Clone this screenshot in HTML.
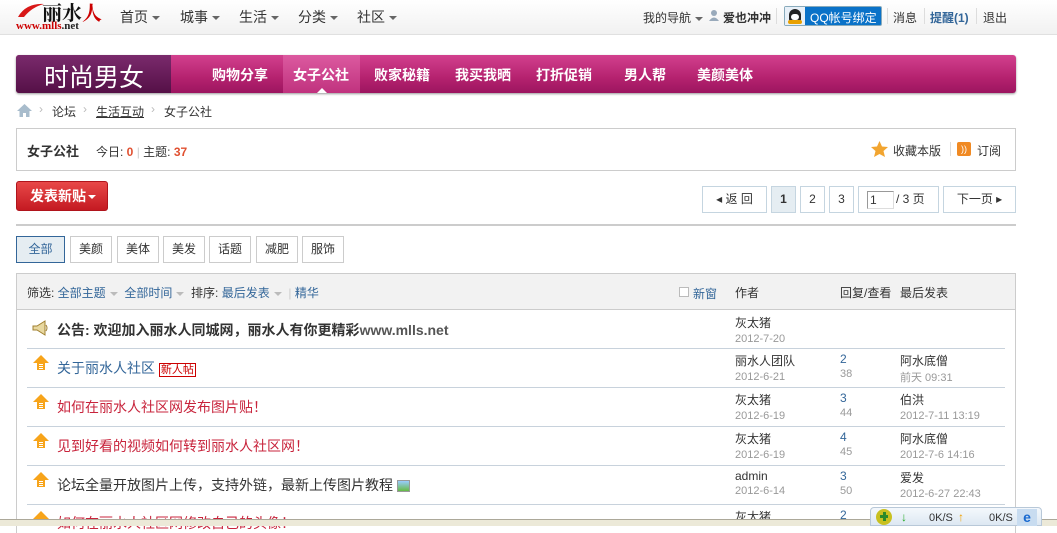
<!DOCTYPE html>
<html><head><meta charset="utf-8"><style>
*{margin:0;padding:0;box-sizing:border-box}
body{width:1057px;height:526px;overflow:hidden;position:relative;background:#fff;font-family:"Liberation Sans","Noto Sans CJK SC",sans-serif;font-size:12px;color:#333}
.a{position:absolute;white-space:nowrap}
.top{left:0;top:0;width:1057px;height:35px;background:linear-gradient(#fff,#f1f1f1);border-bottom:1px solid #e0e0e0}
.nav{font-size:14px;color:#333;top:7px}
.car{display:inline-block;border:4px solid transparent;border-top:4px solid #666;border-bottom:0;vertical-align:middle;margin-left:4px}
.bn{left:16px;top:55px;width:1000px;height:38px;border-radius:3px;background:linear-gradient(#d2408e,#b5226f 60%,#9c1560);box-shadow:0 1px 2px #999}
.bl{left:16px;top:55px;width:155px;height:38px;border-radius:3px 0 0 3px;background:linear-gradient(#7a2a6c,#551047)}
.bi{color:#fff;font-weight:bold;font-size:14px;top:65px}
.box{border:1px solid #ccc}
.pg{top:186px;height:27px;border:1px solid #c5d5e0;background:#fff;text-align:center;line-height:25px;font-size:12px}
.tab{top:236px;height:27px;border:1px solid #ccc;text-align:center;line-height:25px;font-size:12px}
.ln{left:27px;width:978px;height:1px;background:#c8d2dc}
.t{font-size:14px;left:57px}
.au{left:735px;font-size:12px;color:#333}
.dt{color:#999;font-size:11px}
.bl2{color:#369}
</style></head><body>
<div class="a top"></div>
<div class="a" style="left:16px;top:1px;width:28px;height:16px"><svg width="30" height="18"><path d="M2 16 Q10 2 28 3 Q16 6 8 16 Z" fill="#d81818"/></svg></div>
<div class="a" style="left:42px;top:-3px;font:bold 20px 'Noto Serif CJK SC',serif;color:#111">丽水<span style="color:#c00">人</span></div>
<div class="a" style="left:16px;top:20px;font:bold 11px 'Liberation Serif',serif;color:#c00">www.mlls<span style="color:#222">.net</span></div>
<div class="a nav" style="left:120px">首页<i class="car"></i></div>
<div class="a nav" style="left:180px">城事<i class="car"></i></div>
<div class="a nav" style="left:239px">生活<i class="car"></i></div>
<div class="a nav" style="left:298px">分类<i class="car"></i></div>
<div class="a nav" style="left:357px">社区<i class="car"></i></div>
<div class="a" style="left:643px;top:9px">我的导航<i class="car"></i></div>
<div class="a" style="left:709px;top:9px;width:10px;height:12px"><svg width="10" height="12"><circle cx="5" cy="4" r="3" fill="#9ab"/><path d="M0 12 Q5 5 10 12Z" fill="#9ab"/></svg></div>
<div class="a" style="left:723px;top:9px;font-weight:bold">爱也冲冲</div>
<div class="a" style="left:776px;top:8px;width:1px;height:16px;background:#ddd"></div>
<div class="a" style="left:784px;top:6px;width:98px;height:20px;border:1px solid #8ab;background:#0a72c8;border-radius:2px"></div>
<div class="a" style="left:785px;top:7px;width:20px;height:18px;background:#e8f0f8"></div>
<div class="a" style="left:789px;top:9px;width:12px;height:14px;border-radius:6px 6px 4px 4px;background:#222"></div>
<div class="a" style="left:791px;top:14px;width:8px;height:6px;border-radius:3px;background:#fff"></div>
<div class="a" style="left:788px;top:20px;width:14px;height:4px;border-radius:2px;background:#e8a000"></div>
<div class="a" style="left:810px;top:9px;color:#fff">QQ帐号绑定</div>
<div class="a" style="left:887px;top:8px;width:1px;height:16px;background:#ddd"></div>
<div class="a" style="left:893px;top:9px">消息</div>
<div class="a" style="left:924px;top:8px;width:1px;height:16px;background:#ddd"></div>
<div class="a" style="left:930px;top:9px;color:#369;font-weight:bold">提醒(1)</div>
<div class="a" style="left:976px;top:8px;width:1px;height:16px;background:#ddd"></div>
<div class="a" style="left:983px;top:9px">退出</div>

<div class="a bn"></div>
<div class="a bl"></div>
<div class="a" style="left:283px;top:55px;width:77px;height:38px;background:linear-gradient(#dc5aa0,#c0327e)"></div>
<div class="a" style="left:317px;top:88px;border:5px solid transparent;border-bottom:5px solid #fff;border-top:0"></div>
<div class="a" style="left:44px;top:58px;font-size:25px;color:#fff">时尚男女</div>
<div class="a bi" style="left:212px">购物分享</div>
<div class="a bi" style="left:293px">女子公社</div>
<div class="a bi" style="left:374px">败家秘籍</div>
<div class="a bi" style="left:455px">我买我晒</div>
<div class="a bi" style="left:536px">打折促销</div>
<div class="a bi" style="left:624px">男人帮</div>
<div class="a bi" style="left:697px">美颜美体</div>

<div class="a" style="left:17px;top:104px"><svg width="15" height="13"><path d="M7.5 0 L15 7 H12.5 V13 H9 V9 H6 V13 H2.5 V7 H0 Z" fill="#a8bccc"/></svg></div>
<div class="a" style="left:39px;top:102px;color:#bbb">›</div>
<div class="a" style="left:52px;top:103px">论坛</div>
<div class="a" style="left:83px;top:102px;color:#bbb">›</div>
<div class="a" style="left:96px;top:103px;text-decoration:underline">生活互动</div>
<div class="a" style="left:151px;top:102px;color:#bbb">›</div>
<div class="a" style="left:164px;top:103px">女子公社</div>

<div class="a box" style="left:16px;top:128px;width:1000px;height:43px"></div>
<div class="a" style="left:27px;top:141px;font-size:13px;font-weight:bold">女子公社</div>
<div class="a" style="left:96px;top:143px">今日: <b style="color:#e05030">0</b> <span style="color:#ccc">|</span> 主题: <b style="color:#e05030">37</b></div>
<div class="a" style="left:871px;top:141px"><svg width="17" height="16"><path d="M8.5 0 L11 5.5 L17 6 L12.5 10 L14 16 L8.5 13 L3 16 L4.5 10 L0 6 L6 5.5Z" fill="#f2a530"/></svg></div>
<div class="a" style="left:893px;top:142px">收藏本版</div>
<div class="a" style="left:950px;top:142px;width:1px;height:14px;background:#ddd"></div>
<div class="a" style="left:957px;top:142px;width:14px;height:14px;background:#f08a24;border-radius:2px;color:#fff;font-size:9px;line-height:14px;text-align:center">))</div>
<div class="a" style="left:977px;top:142px">订阅</div>

<div class="a" style="left:16px;top:181px;width:92px;height:30px;border:1px solid #b0141c;border-radius:3px;background:linear-gradient(#e84848,#c41a22);color:#fff;font-weight:bold;font-size:14px;line-height:28px;padding-left:13px">发表新贴<i class="car" style="border-top-color:#fff;margin-left:2px"></i></div>

<div class="a pg" style="left:702px;width:65px">◂ 返 回</div>
<div class="a pg" style="left:771px;width:25px;background:#e5edf2;font-weight:bold">1</div>
<div class="a pg" style="left:800px;width:25px">2</div>
<div class="a pg" style="left:829px;width:25px">3</div>
<div class="a pg" style="left:858px;width:81px;text-align:left;padding-left:37px">/ 3 页</div>
<div class="a" style="left:867px;top:191px;width:27px;height:18px;border:1px solid #999;border-right-color:#ddd;border-bottom-color:#ddd;font-size:12px;line-height:16px;padding-left:2px">1</div>
<div class="a pg" style="left:943px;width:73px">下一页 ▸</div>
<div class="a" style="left:16px;top:224px;width:1000px;height:2px;background:#ccc"></div>

<div class="a tab" style="left:16px;width:49px;border-color:#369;background:#e5edf2;color:#369">全部</div>
<div class="a tab" style="left:70px;width:42px">美颜</div>
<div class="a tab" style="left:117px;width:42px">美体</div>
<div class="a tab" style="left:163px;width:42px">美发</div>
<div class="a tab" style="left:209px;width:42px">话题</div>
<div class="a tab" style="left:256px;width:42px">减肥</div>
<div class="a tab" style="left:302px;width:42px">服饰</div>

<div class="a" style="left:16px;top:273px;width:1000px;height:260px;border:1px solid #ccc;border-bottom:0"></div>
<div class="a" style="left:17px;top:274px;width:998px;height:36px;background:#f2f2f2;border-bottom:1px solid #ccc"></div>
<div class="a" style="left:27px;top:284px">筛选: <span class="bl2">全部主题</span><i class="car" style="border-top-color:#bbb"></i>&nbsp; <span class="bl2">全部时间</span><i class="car" style="border-top-color:#bbb"></i>&nbsp; 排序: <span class="bl2">最后发表</span><i class="car" style="border-top-color:#bbb"></i> &nbsp;<span style="color:#ccc">|</span> <span class="bl2">精华</span></div>
<div class="a" style="left:679px;top:287px;width:10px;height:10px;border:1px solid #bbb;background:#fff"></div>
<div class="a bl2" style="left:693px;top:285px">新窗</div>
<div class="a" style="left:735px;top:284px">作者</div>
<div class="a" style="left:840px;top:284px">回复/查看</div>
<div class="a" style="left:900px;top:284px">最后发表</div>

<div class="a" style="left:32px;top:320px"><svg width="17" height="16"><path d="M1 6 H5 L13 1 V15 L5 10 H1Z" fill="#e8d8a0" stroke="#a08030"/><path d="M14 5 Q16 8 14 11" stroke="#a08030" fill="none"/></svg></div>
<div class="a" style="left:57px;top:320px;font-size:14px;font-weight:bold">公告: 欢迎加入丽水人同城网，丽水人有你更精彩<span style="color:#555">www.mlls.net</span></div>
<div class="a au" style="top:314px">灰太猪<br><span class="dt">2012-7-20</span></div>
<div class="a ln" style="top:348px"></div>

<div class="a" style="left:32px;top:354px"><svg width="18" height="18"><path d="M9 1 L17 9 H13 V16 H5 V9 H1 Z" fill="#f7a41a"/><path d="M7 10.5H11M7 12.5H11M7 14.5H11" stroke="#fff"/></svg></div>
<div class="a t" style="top:358px;color:#369">关于丽水人社区 <span style="font-size:11px;color:#c00;border:1px solid #c00;padding:0 1px">新人帖</span></div>
<div class="a au" style="top:352px">丽水人团队<br><span class="dt">2012-6-21</span></div>
<div class="a" style="left:840px;top:352px;color:#369">2<br><span class="dt">38</span></div>
<div class="a" style="left:900px;top:352px">阿水底僧<br><span class="dt">前天 09:31</span></div>
<div class="a ln" style="top:387px"></div>

<div class="a" style="left:32px;top:393px"><svg width="18" height="18"><path d="M9 1 L17 9 H13 V16 H5 V9 H1 Z" fill="#f7a41a"/><path d="M7 10.5H11M7 12.5H11M7 14.5H11" stroke="#fff"/></svg></div>
<div class="a t" style="top:397px;color:#c8243c">如何在丽水人社区网发布图片贴！</div>
<div class="a au" style="top:391px">灰太猪<br><span class="dt">2012-6-19</span></div>
<div class="a" style="left:840px;top:391px;color:#369">3<br><span class="dt">44</span></div>
<div class="a" style="left:900px;top:391px">伯洪<br><span class="dt">2012-7-11 13:19</span></div>
<div class="a ln" style="top:426px"></div>

<div class="a" style="left:32px;top:432px"><svg width="18" height="18"><path d="M9 1 L17 9 H13 V16 H5 V9 H1 Z" fill="#f7a41a"/><path d="M7 10.5H11M7 12.5H11M7 14.5H11" stroke="#fff"/></svg></div>
<div class="a t" style="top:436px;color:#c8243c">见到好看的视频如何转到丽水人社区网！</div>
<div class="a au" style="top:430px">灰太猪<br><span class="dt">2012-6-19</span></div>
<div class="a" style="left:840px;top:430px;color:#369">4<br><span class="dt">45</span></div>
<div class="a" style="left:900px;top:430px">阿水底僧<br><span class="dt">2012-7-6 14:16</span></div>
<div class="a ln" style="top:465px"></div>

<div class="a" style="left:32px;top:471px"><svg width="18" height="18"><path d="M9 1 L17 9 H13 V16 H5 V9 H1 Z" fill="#f7a41a"/><path d="M7 10.5H11M7 12.5H11M7 14.5H11" stroke="#fff"/></svg></div>
<div class="a t" style="top:475px">论坛全量开放图片上传，支持外链，最新上传图片教程 <span style="display:inline-block;width:13px;height:12px;background:linear-gradient(#9cf,#6b4);border:1px solid #999;vertical-align:middle"></span></div>
<div class="a au" style="top:469px">admin<br><span class="dt">2012-6-14</span></div>
<div class="a" style="left:840px;top:469px;color:#369">3<br><span class="dt">50</span></div>
<div class="a" style="left:900px;top:469px">爱发<br><span class="dt">2012-6-27 22:43</span></div>
<div class="a ln" style="top:504px"></div>

<div class="a" style="left:32px;top:510px"><svg width="18" height="18"><path d="M9 1 L17 9 H13 V16 H5 V9 H1 Z" fill="#f7a41a"/></svg></div>
<div class="a t" style="top:513px;color:#c8243c">如何在丽水人社区网修改自己的头像！</div>
<div class="a au" style="top:508px">灰太猪</div>
<div class="a" style="left:840px;top:508px;color:#369">2</div>

<div class="a" style="left:0;top:519px;width:1057px;height:7px;background:#ece9d8;border-top:1px solid #aca899"></div>
<div class="a" style="left:870px;top:507px;width:172px;height:19px;background:linear-gradient(#f4f8fc,#dde8f2);border:1px solid #b8c8d8;border-radius:4px 4px 0 0"></div>
<div class="a" style="left:876px;top:509px;width:16px;height:16px;border-radius:8px;background:#c8c020"></div>
<div class="a" style="left:880px;top:515px;width:8px;height:3px;background:#2a8a2a"></div>
<div class="a" style="left:883px;top:512px;width:3px;height:9px;background:#2a8a2a"></div>
<div class="a" style="left:901px;top:510px;color:#2a2;font-size:12px;font-weight:bold">↓</div>
<div class="a" style="left:929px;top:512px;font-size:11px">0K/S</div>
<div class="a" style="left:958px;top:510px;color:#f0a000;font-size:12px;font-weight:bold">↑</div>
<div class="a" style="left:989px;top:512px;font-size:11px">0K/S</div>
<div class="a" style="left:1017px;top:509px;width:20px;height:17px;background:#c8dcf0;color:#1a6ad0;font-weight:bold;font-size:14px;text-align:center;line-height:17px">e</div>
</body></html>
